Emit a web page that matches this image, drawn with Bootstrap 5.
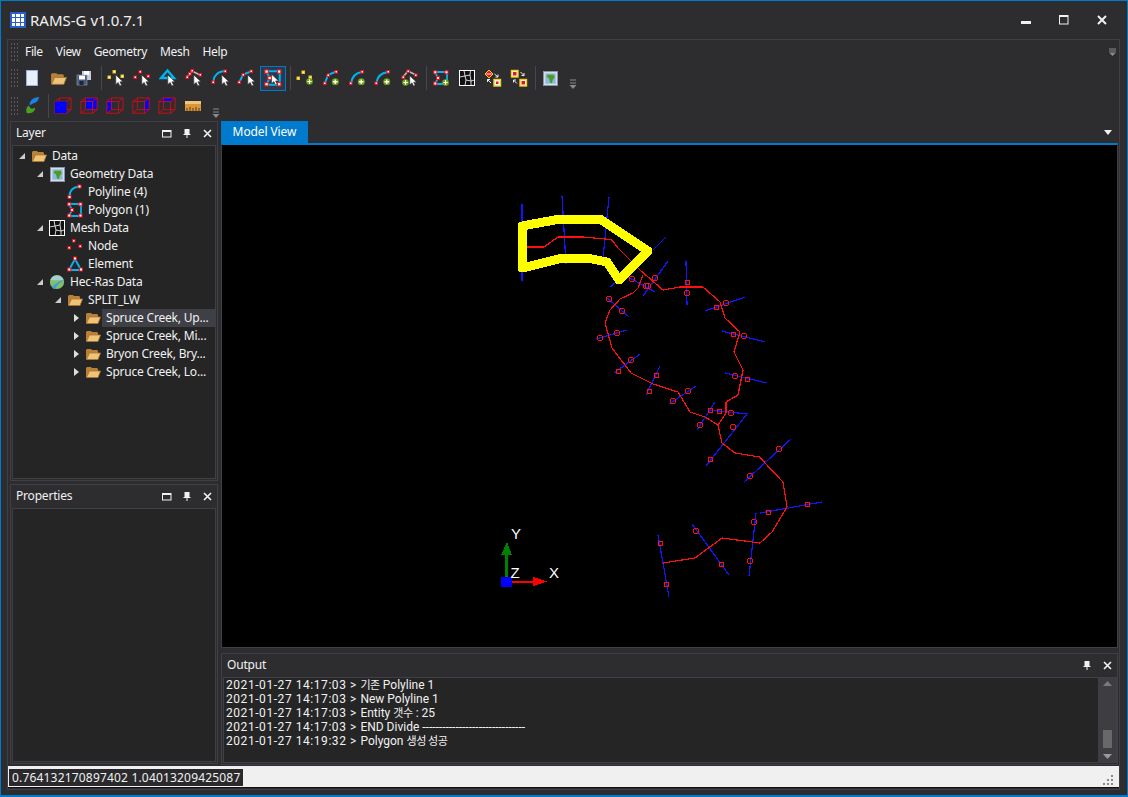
<!DOCTYPE html>
<html lang="en">
<head>
<meta charset="utf-8">
<title>RAMS-G v1.0.7.1</title>
<link href="https://cdn.jsdelivr.net/npm/bootstrap@5.3.0/dist/css/bootstrap.min.css" rel="stylesheet">
<style>
html,body{height:100%;margin:0;background:#2d2d30;overflow:hidden}
body{font-family:"Noto Sans","Noto Sans CJK KR",sans-serif;font-size:12px;color:#f1f1f1;line-height:1.2;letter-spacing:-.2px}
.win{width:1128px;height:797px;border:1px solid #007acc;border-width:1px 1px 2px 1px;background:#2d2d30}
.titlebar{height:38px;padding-left:9px}
.titlebar .ttl{font-size:15px;margin-left:4px;margin-top:-1px;letter-spacing:0}
.wbtns{margin-right:6px;gap:0}
.wbtn{width:38px;height:24px;display:flex;align-items:center;justify-content:center}
.shell{margin:0 7px 0 6px;height:751px;border:1px solid #3f3f46}
.menu{height:24px}
.grip{width:8px;flex:none;margin-left:2px;margin-right:1px;align-self:center;height:20px;background-image:radial-gradient(#5a5a5e 0.8px,transparent 1px);background-size:3px 4px}
.menu a{color:#f1f1f1;text-decoration:none;padding:0 6px;margin-right:1px;letter-spacing:-.35px}
.tools{height:28px}
.tools2{height:27px}
.tb{width:26px;height:24px;flex:none;display:flex;align-items:center;justify-content:center}
.tb.on{border:1px solid #007acc;background:#2a3a48;height:25px}
.sep{width:1px;height:24px;background:#47474b;margin:0 2px 0 4px;flex:none}
.sep.t{margin:0 1px 0 3px}
.more{width:14px;margin-left:3px;flex:none;align-self:flex-end;margin-bottom:2px}
.layout{height:645px;padding:2px 1px 0 2px;gap:3px}
.left{width:208px;gap:3px}
.panel{border:1px solid #3f3f46;background:#2d2d30}
.phead{height:23px;padding:0 0 0 5px;flex:none}
.pbody{background:#252526;border:1px solid #3f3f46;margin:0 1px 1px 1px;min-height:0}
.hicon{width:20px;display:flex;justify-content:center}
.tree{padding-top:1px;overflow:hidden}
.node{height:18px;flex:none}
.exp{width:18px;flex:none;display:flex;justify-content:center;align-items:center}
.ic{width:16px;height:18px;flex:none;display:flex;align-items:center;justify-content:center}
.lab{margin-left:1px;padding:0 4px;height:18px;line-height:18px;flex:1;white-space:nowrap;overflow:hidden;color:#f1f1f1}
.lab.sel{background:#3f3f46}
.l1{margin-left:18px}.l2{margin-left:36px}.l3{margin-left:54px}
.right{width:897px}
.tabs{height:22px;flex:none}
.tab{width:87px;background:#007acc;color:#fff;text-align:center;line-height:22px;letter-spacing:-.1px}
.canvas{height:505px;border:1px solid #3f3f46;border-top:2px solid #007acc;background:#000;flex:none}
.canvas svg{display:block;width:100%;height:100%}
.gapv{height:5px;flex:none}
.out{height:112px;flex:none}
.log{padding:0 2px;line-height:14px;font-size:12px;white-space:pre;color:#f1f1f1;font-family:Roboto,"Noto Sans CJK KR",sans-serif;letter-spacing:0}
.log b{font-weight:400;letter-spacing:.56px}
.log span{font-size:11px;line-height:0;font-family:"Noto Sans CJK KR",sans-serif;letter-spacing:-.4px}
.scroll{width:18px;background:#3e3e42;padding:3px 0}
.thumb{width:9px;height:18px;background:#686868;margin-top:auto;margin-bottom:6px}
.status{height:22px;margin:2px 0 0 0;background:#f0f0f0;border-bottom:1px solid #111;padding:2px 1px 1px 1px}
.status .val{background:#2a2a2d;color:#f1f1f1;padding:0 3px;line-height:17px;font-size:12px;letter-spacing:.18px}
.rl{fill:none;stroke:#ff1010;stroke-width:1.2}
.bl{fill:none;stroke:#1414ff;stroke-width:1.2}
.ci{fill:none;stroke:#ff1010;stroke-width:1}
.ci rect{width:4px;height:4px}
.axl{font-family:"Liberation Sans",sans-serif;font-size:15px;fill:#fff;letter-spacing:0}
</style>
</head>
<body>
<svg width="0" height="0" class="d-block" style="height:0">
<defs>
<symbol id="cur" viewBox="0 0 10 16"><path d="M1 1v12l3-2.600 2 4.400 2.200-1-2-4.200H10z" fill="#fff" stroke="#333" stroke-width=".8"/></symbol>
<symbol id="folder" viewBox="0 0 16 16"><path d="M1 13V4l1-1h4l1 1h5l1 1v2H5L3 13z" fill="#b9803a"/><path d="M1.500 13.500 4.500 7h11l-2.500 6.500z" fill="#f0c478" stroke="#a87830" stroke-width=".8"/></symbol>
<symbol id="globe" viewBox="0 0 16 16"><rect x=".5" y=".5" width="15" height="15" fill="#d6deea" stroke="#8a94ac"/><rect x="2.500" y="2.500" width="11" height="11" fill="#8cb8dc"/><path d="M4.500 4h7l1 3-2 2-1 4-2-1-1-4-2.500-2z" fill="#4f9a20"/></symbol>
<symbol id="mesh" viewBox="0 0 16 16"><rect x=".5" y=".5" width="15" height="15" fill="#111" stroke="#fff"/><path d="M5 .5 6 6l-5.500 1M6 6l5-1 .5-4.500M11 5l1 6 3.500-1M12 11l-5-1-1-4M7 10l-1 5.500M12 11v4.500" fill="none" stroke="#fff" stroke-width=".8"/></symbol>
<symbol id="earth" viewBox="0 0 18 18"><circle cx="9" cy="9" r="8" fill="#7fc06a"/><path d="M1.500 7A8 8 0 0 1 16.500 7z" fill="#a6cdd8"/><path d="M3 14c3-1 4-3 11-7l2 1c-5 2-7 5-9 9-2 0-3-1-4-3z" fill="#3f9ed8"/></symbol>
<symbol id="poly" viewBox="0 0 16 16"><path d="M2.500 13c0-6 2-9 9-10.500" fill="none" stroke="#00b4f0" stroke-width="2"/><rect x="1" y="11.500" width="3" height="3" fill="#fff" stroke="#f01020"/><rect x="11" y="1" width="3" height="3" fill="#fff" stroke="#f01020"/></symbol>
<symbol id="pgon" viewBox="0 0 16 16"><path d="M2 2h12v12H2l3-6z" fill="none" stroke="#00b4f0" stroke-width="1.800"/><g fill="#fff" stroke="#f01020"><rect x=".8" y=".8" width="3" height="3"/><rect x="12" y=".8" width="3" height="3"/><rect x="12" y="12" width="3" height="3"/><rect x=".8" y="12" width="3" height="3"/><rect x="3.500" y="6.500" width="3" height="3"/></g></symbol>
<symbol id="nodes" viewBox="0 0 16 16"><g fill="#fff" stroke="#f01020"><rect x="5.500" y="1.500" width="2.500" height="2.500"/><rect x="1" y="8.500" width="2.500" height="2.500"/><rect x="12" y="7" width="2.500" height="2.500"/></g></symbol>
<symbol id="tri" viewBox="0 0 16 16"><path d="M8 3 14 14H2z" fill="none" stroke="#00b4f0" stroke-width="2"/><g fill="#fff" stroke="#f01020"><rect x="6.500" y="1" width="3" height="3"/><rect x="12.500" y="12" width="3" height="3"/><rect x=".8" y="12" width="3" height="3"/></g></symbol>
<symbol id="plus" viewBox="0 0 8 8"><circle cx="4" cy="4" r="3.800" fill="#6aa010"/><path d="M4 1.500v5M1.500 4h5" stroke="#fff" stroke-width="1.400"/></symbol>
<symbol id="cube" viewBox="0 0 20 20"><g fill="none" stroke="#c01018" stroke-width="1.100"><rect x="1" y="5" width="13" height="13"/><path d="M1 5 6 1h13v13l-5 4M14 5l5-4M6 1v13H19M1 18l5-4"/></g></symbol>
</defs>
</svg>
<div class="win d-flex flex-column">
  <div class="titlebar d-flex align-items-center">
    <svg width="16" height="16" viewBox="0 0 16 16"><rect width="16" height="16" fill="#2a5ec8"/><g fill="#fff"><rect x="2" y="2" width="3" height="3"/><rect x="6" y="2" width="4" height="3"/><rect x="11" y="2" width="3" height="3"/><rect x="2" y="6" width="3" height="4"/><rect x="6" y="6" width="4" height="4"/><rect x="11" y="6" width="3" height="4"/><rect x="2" y="11" width="3" height="3"/><rect x="6" y="11" width="4" height="3"/><rect x="11" y="11" width="3" height="3"/></g></svg>
    <span class="ttl">RAMS-G v1.0.7.1</span>
    <div class="wbtns d-flex ms-auto">
      <div class="wbtn"><svg width="10" height="10" viewBox="0 0 10 10"><rect y="6" width="10" height="3" fill="#f1f1f1"/></svg></div>
      <div class="wbtn"><svg width="10" height="10" viewBox="0 0 10 10"><rect x=".5" y=".5" width="8.500" height="8.500" fill="none" stroke="#f1f1f1"/><rect x=".5" y=".5" width="8.500" height="1.500" fill="#f1f1f1"/></svg></div>
      <div class="wbtn"><svg width="10" height="10" viewBox="0 0 10 10"><path d="M1 1l8 8M9 1 1 9" stroke="#f1f1f1" stroke-width="2"/></svg></div>
    </div>
  </div>
  <div class="shell d-flex flex-column">
    <nav class="menu d-flex align-items-center">
      <div class="grip"></div>
      <a href="#">File</a><a href="#">View</a><a href="#">Geometry</a><a href="#">Mesh</a><a href="#">Help</a>
      <svg class="ms-auto" style="margin-right:2px" width="9" height="8" viewBox="0 0 9 8"><path d="M1 1h7M1 3h7" stroke="#8a8a8a"/><path d="M1 4.500h7L4.500 8z" fill="#8a8a8a"/></svg>
    </nav>
    <div class="tools d-flex align-items-center">
      <div class="grip"></div>
      <div class="tb"><svg width="12" height="16" viewBox="0 0 12 16"><rect x=".5" y=".5" width="11" height="15" fill="#e8eefa" stroke="#9cb0d0"/></svg></div>
      <div class="tb"><svg width="17" height="17"><use href="#folder"/></svg></div>
      <div class="tb"><svg width="16" height="16" viewBox="0 0 16 16"><rect x="6" y="1" width="9" height="9" fill="#c8ccd4"/><rect x="8" y="1" width="5" height="4" fill="#fff"/><rect x="1" y="5" width="10" height="10" fill="#4a5a7a" stroke="#8fa0c0" stroke-width=".6"/><rect x="3" y="5.500" width="6" height="4" fill="#fff"/><rect x="3.500" y="11" width="4" height="4" fill="#1e2636"/></svg></div>
      <div class="sep"></div>
      <div class="tb"><svg width="20" height="20" viewBox="0 0 20 20"><g fill="#fff" stroke="#e8c020"><rect x="6" y="2.500" width="2.500" height="2.500"/><rect x="1" y="8" width="2.500" height="2.500"/><rect x="14" y="7" width="2.500" height="2.500"/></g><use href="#cur" x="8" y="6" width="8" height="13"/></svg></div>
      <div class="tb"><svg width="20" height="20" viewBox="0 0 20 20"><g fill="#fff" stroke="#f01020"><rect x="6" y="2.500" width="2.500" height="2.500"/><rect x="1" y="8" width="2.500" height="2.500"/><rect x="14" y="7" width="2.500" height="2.500"/></g><use href="#cur" x="8" y="6" width="8" height="13"/></svg></div>
      <div class="tb"><svg width="20" height="20" viewBox="0 0 20 20"><path d="M8.500 2.500 15 10H2z" fill="none" stroke="#00b4f0" stroke-width="2.400"/><use href="#cur" x="8" y="6" width="8" height="13"/></svg></div>
      <div class="tb"><svg width="20" height="20" viewBox="0 0 20 20"><path d="M2 9 7 3l8 4" fill="none" stroke="#b8b8b8" stroke-width="1.800"/><g fill="#fff" stroke="#f01020"><rect x="6" y="1.500" width="2.500" height="2.500"/><rect x="1" y="8" width="2.500" height="2.500"/><rect x="14" y="5.500" width="2.500" height="2.500"/><rect x="3.500" y="4.500" width="2.500" height="2.500"/></g><use href="#cur" x="8" y="6" width="8" height="13"/></svg></div>
      <div class="tb"><svg width="20" height="20" viewBox="0 0 20 20"><path d="M2.500 13C3 7 6 4 13 3" fill="none" stroke="#00b4f0" stroke-width="2"/><g fill="#fff" stroke="#f01020"><rect x="1" y="13" width="2.500" height="2.500"/><rect x="13" y="2" width="2.500" height="2.500"/></g><use href="#cur" x="10" y="6" width="8" height="13"/></svg></div>
      <div class="tb"><svg width="20" height="20" viewBox="0 0 20 20"><path d="M2.500 14 6 6.500l8-3" fill="none" stroke="#00b4f0" stroke-width="2"/><g fill="#fff" stroke="#f01020"><rect x="1" y="13" width="2.500" height="2.500"/><rect x="5" y="5.500" width="2.500" height="2.500"/><rect x="13" y="2" width="2.500" height="2.500"/></g><use href="#cur" x="10" y="6" width="8" height="13"/></svg></div>
      <div class="tb on"><svg width="18" height="18" viewBox="0 0 16 16"><use href="#pgon"/><use href="#cur" x="6" y="4" width="7" height="11"/></svg></div>
      <div class="sep"></div>
      <div class="tb"><svg width="20" height="20" viewBox="0 0 20 20"><g fill="#fff3a0" stroke="#e8c020"><rect x="6" y="3" width="2.500" height="2.500"/><rect x="1" y="9" width="2.500" height="2.500"/><rect x="13" y="8" width="2.500" height="2.500"/></g><use href="#plus" x="10" y="10" width="7" height="7"/></svg></div>
      <div class="tb"><svg width="20" height="20" viewBox="0 0 20 20"><path d="M3 15 6 7l7-3" fill="none" stroke="#00b4f0" stroke-width="2"/><g fill="#fff" stroke="#f01020"><rect x="1.500" y="14" width="2.500" height="2.500"/><rect x="5" y="6" width="2.500" height="2.500"/><rect x="13" y="2.500" width="2.500" height="2.500"/></g><use href="#plus" x="9.500" y="10" width="7.500" height="7.500"/></svg></div>
      <div class="tb"><svg width="20" height="20" viewBox="0 0 20 20"><path d="M3 15C4 9 7 5 14 4" fill="none" stroke="#00b4f0" stroke-width="2"/><g fill="#fff" stroke="#f01020"><rect x="1.500" y="14" width="2.500" height="2.500"/><rect x="13" y="2.500" width="2.500" height="2.500"/></g><use href="#plus" x="9.500" y="10" width="7.500" height="7.500"/></svg></div>
      <div class="tb"><svg width="20" height="20" viewBox="0 0 20 20"><path d="M2.500 15C3 9 7 5 14 4" fill="none" stroke="#00b4f0" stroke-width="2"/><g fill="#fff" stroke="#f01020"><rect x="1" y="14" width="2.500" height="2.500"/><rect x="13" y="2.500" width="2.500" height="2.500"/></g><use href="#plus" x="9" y="10" width="7.500" height="7.500"/></svg></div>
      <div class="tb"><svg width="20" height="20" viewBox="0 0 20 20"><path d="M3 9 8 3l8 4" fill="none" stroke="#b8b8b8" stroke-width="1.800"/><g fill="#fff" stroke="#f01020"><rect x="7" y="2" width="2.500" height="2.500"/><rect x="2" y="8" width="2.500" height="2.500"/><rect x="14.500" y="6" width="2.500" height="2.500"/></g><use href="#plus" x="2" y="11" width="7" height="7"/><use href="#cur" x="9" y="7" width="7.500" height="12"/></svg></div>
      <div class="sep t"></div>
      <div class="tb"><svg width="16" height="16"><use href="#pgon"/><use href="#plus" x="9" y="9" width="7" height="7"/></svg></div>
      <div class="tb"><svg width="16" height="16"><use href="#mesh"/></svg></div>
      <div class="tb"><svg width="18" height="18" viewBox="0 0 18 18"><path d="M5 1 9 5 5 9 1 5z" fill="#f01020" stroke="#f0d020"/><path d="M2.500 5h5" stroke="#fff"/><rect x="10" y="10.500" width="6.500" height="6.500" fill="#fff" stroke="#f0d020" stroke-width="1.400"/><rect x="12" y="12.500" width="2.500" height="2.500" fill="#f01020"/><path d="M10.500 5 14 8M14 5.500V8h-2.500M7 14 3.500 10.500M3.500 13v-2.500H6" fill="none" stroke="#eee"/></svg></div>
      <div class="tb"><svg width="18" height="18" viewBox="0 0 18 18"><rect x="1.500" y="1.500" width="6.500" height="6.500" fill="#fff" stroke="#f0d020" stroke-width="1.400"/><rect x="3" y="3" width="3.500" height="3.500" fill="#f01020"/><rect x="10" y="10.500" width="6.500" height="6.500" fill="#fff" stroke="#f0d020" stroke-width="1.400"/><rect x="11.500" y="12" width="3.500" height="3.500" fill="#f01020"/><path d="M10.500 3 14 6.500M14 4v2.500h-2.500M7 14.500 3.500 11M3.500 13.500V11H6" fill="none" stroke="#eee"/></svg></div>
      <div class="sep t"></div>
      <div class="tb"><svg width="15" height="15"><use href="#globe"/></svg></div>
      <svg class="more" width="9" height="12" viewBox="0 0 9 12"><path d="M1.500 2h6M1.500 5h6" stroke="#8a8a8a"/><path d="M1 7h7L4.500 11z" fill="#8a8a8a"/></svg>
    </div>
    <div class="tools2 d-flex align-items-center">
      <div class="grip"></div>
      <div class="tb"><svg width="18" height="19" viewBox="0 0 16 18"><path d="M5 9c-2 1-3 4-2 7 5 1 8-1 8-5-3 2-5 1-6-2z" fill="#4aa020"/><path d="M6 9c-1-4 3-8 9-8-1 2-1 3-2 4-2 2-5 2-7 4z" fill="#1a82e0"/></svg></div>
      <div class="sep t"></div>
      <div class="tb"><svg width="18" height="18" viewBox="0 0 20 20"><use href="#cube"/><rect x="1" y="5" width="13" height="13" fill="#0000ff"/></svg></div>
      <div class="tb"><svg width="18" height="18" viewBox="0 0 20 20"><rect x="6" y="1" width="13" height="13" fill="#0000ff"/><use href="#cube"/></svg></div>
      <div class="tb"><svg width="18" height="18" viewBox="0 0 20 20"><path d="M1 5 6 1v13l-5 4z" fill="#0000ff"/><use href="#cube"/></svg></div>
      <div class="tb"><svg width="18" height="18" viewBox="0 0 20 20"><path d="M14 5l5-4v13l-5 4z" fill="#0000ff"/><use href="#cube"/></svg></div>
      <div class="tb"><svg width="18" height="18" viewBox="0 0 20 20"><path d="M1 5 6 1h13l-5 4z" fill="#0000ff"/><use href="#cube"/></svg></div>
      <div class="tb"><svg width="16" height="10" viewBox="0 0 16 10"><rect width="16" height="10" fill="#d8983a"/><rect y="0" width="16" height="3" fill="#f0c47a"/><path d="M2 10V7M5 10V6M8 10V7M11 10V6M14 10V7" stroke="#5a3a10"/></svg></div>
      <svg class="more" style="margin-bottom:0" width="9" height="12" viewBox="0 0 9 12"><path d="M1.500 2h6M1.500 5h6" stroke="#8a8a8a"/><path d="M1 7h7L4.500 11z" fill="#8a8a8a"/></svg>
    </div>
    <div class="layout d-flex">
      <div class="left d-flex flex-column">
        <section class="panel d-flex flex-column" style="height:360px">
          <div class="phead d-flex align-items-center"><span>Layer</span>
            <div class="d-flex ms-auto align-items-center">
              <div class="hicon"><svg width="10" height="8" viewBox="0 0 10 8"><rect x=".5" y=".5" width="8.500" height="6.500" fill="none" stroke="#f1f1f1"/><rect width="9" height="2" fill="#f1f1f1"/></svg></div>
              <div class="hicon"><svg width="8" height="9" viewBox="0 0 8 9"><path d="M1.500 0h5v5h1v1H.500V5h1zM3.500 6h1v3h-1z" fill="#f1f1f1"/></svg></div>
              <div class="hicon"><svg width="9" height="9" viewBox="0 0 9 9"><path d="M1 1l7 7M8 1 1 8" stroke="#f1f1f1" stroke-width="1.600"/></svg></div>
            </div>
          </div>
          <div class="pbody tree flex-grow-1 d-flex flex-column">
            <div class="node d-flex"><div class="exp"><svg width="6" height="6"><path d="M6 0v6H0z" fill="#ccc"/></svg></div><div class="ic"><svg width="16" height="16"><use href="#folder"/></svg></div><div class="lab">Data</div></div>
            <div class="node d-flex l1"><div class="exp"><svg width="6" height="6"><path d="M6 0v6H0z" fill="#ccc"/></svg></div><div class="ic"><svg width="15" height="15"><use href="#globe"/></svg></div><div class="lab">Geometry Data</div></div>
            <div class="node d-flex l2"><div class="exp"></div><div class="ic"><svg width="16" height="16"><use href="#poly"/></svg></div><div class="lab">Polyline (4)</div></div>
            <div class="node d-flex l2"><div class="exp"></div><div class="ic"><svg width="16" height="16"><use href="#pgon"/></svg></div><div class="lab">Polygon (1)</div></div>
            <div class="node d-flex l1"><div class="exp"><svg width="6" height="6"><path d="M6 0v6H0z" fill="#ccc"/></svg></div><div class="ic"><svg width="16" height="16"><use href="#mesh"/></svg></div><div class="lab">Mesh Data</div></div>
            <div class="node d-flex l2"><div class="exp"></div><div class="ic"><svg width="16" height="16"><use href="#nodes"/></svg></div><div class="lab">Node</div></div>
            <div class="node d-flex l2"><div class="exp"></div><div class="ic"><svg width="16" height="16"><use href="#tri"/></svg></div><div class="lab">Element</div></div>
            <div class="node d-flex l1"><div class="exp"><svg width="6" height="6"><path d="M6 0v6H0z" fill="#ccc"/></svg></div><div class="ic"><svg width="16" height="16"><use href="#earth"/></svg></div><div class="lab">Hec-Ras Data</div></div>
            <div class="node d-flex l2"><div class="exp"><svg width="6" height="6"><path d="M6 0v6H0z" fill="#ccc"/></svg></div><div class="ic"><svg width="16" height="16"><use href="#folder"/></svg></div><div class="lab">SPLIT_LW</div></div>
            <div class="node d-flex l3"><div class="exp"><svg width="5" height="8"><path d="M0 0l5 4-5 4z" fill="#ddd"/></svg></div><div class="ic"><svg width="16" height="16"><use href="#folder"/></svg></div><div class="lab sel">Spruce Creek, Up...</div></div>
            <div class="node d-flex l3"><div class="exp"><svg width="5" height="8"><path d="M0 0l5 4-5 4z" fill="#ddd"/></svg></div><div class="ic"><svg width="16" height="16"><use href="#folder"/></svg></div><div class="lab">Spruce Creek, Mi...</div></div>
            <div class="node d-flex l3"><div class="exp"><svg width="5" height="8"><path d="M0 0l5 4-5 4z" fill="#ddd"/></svg></div><div class="ic"><svg width="16" height="16"><use href="#folder"/></svg></div><div class="lab">Bryon Creek, Bry...</div></div>
            <div class="node d-flex l3"><div class="exp"><svg width="5" height="8"><path d="M0 0l5 4-5 4z" fill="#ddd"/></svg></div><div class="ic"><svg width="16" height="16"><use href="#folder"/></svg></div><div class="lab">Spruce Creek, Lo...</div></div>
          </div>
        </section>
        <section class="panel d-flex flex-column flex-grow-1">
          <div class="phead d-flex align-items-center"><span>Properties</span>
            <div class="d-flex ms-auto align-items-center">
              <div class="hicon"><svg width="10" height="8" viewBox="0 0 10 8"><rect x=".5" y=".5" width="8.500" height="6.500" fill="none" stroke="#f1f1f1"/><rect width="9" height="2" fill="#f1f1f1"/></svg></div>
              <div class="hicon"><svg width="8" height="9" viewBox="0 0 8 9"><path d="M1.500 0h5v5h1v1H.500V5h1zM3.500 6h1v3h-1z" fill="#f1f1f1"/></svg></div>
              <div class="hicon"><svg width="9" height="9" viewBox="0 0 9 9"><path d="M1 1l7 7M8 1 1 8" stroke="#f1f1f1" stroke-width="1.600"/></svg></div>
            </div>
          </div>
          <div class="pbody flex-grow-1"></div>
        </section>
      </div>
      <div class="right d-flex flex-column">
        <div class="tabs d-flex"><div class="tab">Model View</div>
          <svg class="ms-auto align-self-center" style="margin-right:6px" width="8" height="5" viewBox="0 0 8 5"><path d="M0 0h8L4 5z" fill="#f1f1f1"/></svg>
        </div>
        <div class="canvas">
          <svg viewBox="222 145 895 502" preserveAspectRatio="none" shape-rendering="crispEdges">
            <g class="bl">
              <path d="M522 204V281M562 196 566 264M609 197 603 258M666 237 653 250M668 261 643 296M628 277 655 292M610 287 615 283M686 261 687 305M745 297 705 311M722 331 765 342M725 373 767 383M606 297 629 317M596 339 627 330M614 373 640 354M646 395 660 366M669 404 696 386M697 430 715 402M710 410 747 414 706 466M791 439 744 482M760 513 822 502M756 513 749 576M692 524 729 575M658 535 669 597"/>
            </g>
            <g class="rl">
              <path d="M527 247H544L558 237H583L605 239 612 240 618 248 640 270 663 290 680 287H703L720 302 725 318 740 332 734 352 743 370 738 395 726 402V413L718 425 722 443 735 453 760 457 765 463 783 482 787 507 772 532 760 543 722 538 695 558 663 563"/>
              <path d="M643 275 638 288 633 293 620 299 610 310 605 323 612 348 631 373 653 384 678 392 690 412 705 417 718 425"/>
            </g>
            <path d="M522 226 560 219H600L648 251 619 280 607 262 587 258H563L522 268z" fill="none" stroke="#ffff00" stroke-width="9" stroke-linejoin="round"/>
            <g class="ci">
              <circle cx="632" cy="279" r="2.600"/><circle cx="648" cy="286" r="2.600"/><circle cx="646" cy="286" r="2.600"/><circle cx="655" cy="278" r="2.600"/>
              <rect x="685" y="280"/><circle cx="687" cy="293" r="2.600"/><circle cx="726" cy="303" r="2.600"/><rect x="714" y="305"/>
              <circle cx="609" cy="299" r="2.600"/><circle cx="622" cy="311" r="2.600"/><circle cx="600" cy="338" r="2.600"/><circle cx="617" cy="333" r="2.600"/>
              <rect x="731" y="332"/><circle cx="744" cy="336" r="2.600"/><circle cx="735" cy="376" r="2.600"/><rect x="745" y="377"/>
              <rect x="616" y="369"/><circle cx="631" cy="360" r="2.600"/><rect x="647" y="389"/><rect x="654" y="373"/>
              <circle cx="673" cy="401" r="2.600"/><circle cx="688" cy="391" r="2.600"/><circle cx="700" cy="425" r="2.600"/><rect x="708" y="408"/>
              <rect x="717" y="409"/><circle cx="731" cy="413" r="2.600"/><circle cx="733" cy="427" r="2.600"/><rect x="708" y="457"/>
              <circle cx="779" cy="449" r="2.600"/><circle cx="750" cy="476" r="2.600"/><rect x="766" y="510"/><rect x="805" y="502"/>
              <circle cx="754" cy="522" r="2.600"/><circle cx="750" cy="561" r="2.600"/><circle cx="696" cy="531" r="2.600"/><rect x="719" y="562"/>
              <rect x="658" y="541"/><rect x="664" y="582"/>
            </g>
            <rect x="505" y="555" width="3" height="22" fill="#008000"/>
            <path d="M507 542 512 555H501z" fill="#008000"/>
            <rect x="512" y="581" width="22" height="2" fill="#ff0000"/>
            <path d="M533 577 547 581.500 533 586z" fill="#ff0000"/>
            <rect x="501" y="577" width="11" height="10" fill="#0000ff"/>
            <text class="axl" x="511" y="539">Y</text>
            <text class="axl" x="510.500" y="577.500">Z</text>
            <text class="axl" x="549" y="577.500">X</text>
          </svg>
        </div>
        <div class="gapv"></div>
        <section class="panel out d-flex flex-column">
          <div class="phead d-flex align-items-center"><span>Output</span>
            <div class="d-flex ms-auto align-items-center">
              <div class="hicon"><svg width="8" height="9" viewBox="0 0 8 9"><path d="M1.500 0h5v5h1v1H.500V5h1zM3.500 6h1v3h-1z" fill="#f1f1f1"/></svg></div>
              <div class="hicon"><svg width="9" height="9" viewBox="0 0 9 9"><path d="M1 1l7 7M8 1 1 8" stroke="#f1f1f1" stroke-width="1.600"/></svg></div>
            </div>
          </div>
          <div class="pbody flex-grow-1 d-flex" style="margin-right:0">
            <div class="log flex-grow-1"><b>2021-01-27 14:17:03 &gt; </b><span>기존</span> Polyline 1
<b>2021-01-27 14:17:03 &gt; </b>New Polyline 1
<b>2021-01-27 14:17:03 &gt; </b>Entity <span>갯수</span> : 25
<b>2021-01-27 14:17:03 &gt; </b>END Divide -------------------------------
<b>2021-01-27 14:19:32 &gt; </b>Polygon <span>생성 성공</span></div>
            <div class="scroll d-flex flex-column align-items-center">
              <svg width="9" height="5" viewBox="0 0 9 5"><path d="M4.500 0 9 5H0z" fill="#7a7a7e"/></svg>
              <div class="thumb"></div>
              <svg width="9" height="5" viewBox="0 0 9 5"><path d="M0 0h9L4.500 5z" fill="#9a9a9e"/></svg>
            </div>
          </div>
        </section>
      </div>
    </div>
    <div class="status d-flex align-items-center">
      <span class="val">0.764132170897402 1.04013209425087</span>
      <svg class="ms-auto me-1 align-self-end" width="11" height="11" viewBox="0 0 11 11" fill="#8a8a8a"><rect x="8" y="0" width="2" height="2"/><rect x="4" y="4" width="2" height="2"/><rect x="8" y="4" width="2" height="2"/><rect x="0" y="8" width="2" height="2"/><rect x="4" y="8" width="2" height="2"/><rect x="8" y="8" width="2" height="2"/></svg>
    </div>
  </div>
</div>
</body>
</html>
